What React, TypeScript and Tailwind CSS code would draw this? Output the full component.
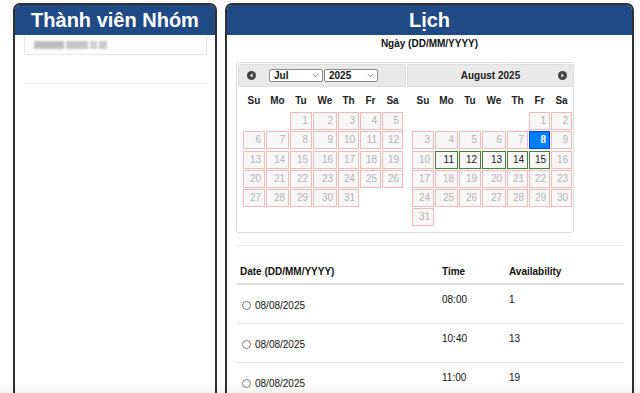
import React from "react";

const COLS = "grid grid-cols-[22px_23px_22px_24px_21px_21px_21px] gap-x-[1px]";
const DAY_NAMES = ["Su", "Mo", "Tu", "We", "Th", "Fr", "Sa"];

type Cell = { day: number; state?: "open" | "selected" } | null;

function buildMonth(startDow: number, days: number, open: number[], selected?: number): Cell[] {
  const cells: Cell[] = [];
  for (let i = 0; i < startDow; i++) cells.push(null);
  for (let d = 1; d <= days; d++) {
    cells.push({
      day: d,
      state: d === selected ? "selected" : open.includes(d) ? "open" : undefined,
    });
  }
  return cells;
}

const JULY = buildMonth(2, 31, []);
const AUGUST = buildMonth(5, 31, [11, 12, 13, 14, 15], 8);

const SLOTS = [
  { date: "08/08/2025", time: "08:00", avail: "1" },
  { date: "08/08/2025", time: "10:40", avail: "13" },
  { date: "08/08/2025", time: "11:00", avail: "19" },
];

function NavIcon({ dir }: { dir: "prev" | "next" }) {
  return (
    <svg width="9" height="9" viewBox="0 0 10 10" aria-hidden>
      <circle cx="5" cy="5" r="5" fill="#444" />
      {dir === "prev" ? (
        <path d="M6.2 2.8 L3.4 5 L6.2 7.2 Z" fill="#fff" />
      ) : (
        <path d="M3.8 2.8 L6.6 5 L3.8 7.2 Z" fill="#fff" />
      )}
    </svg>
  );
}

function FakeSelect({ value, width }: { value: string; width: string }) {
  return (
    <div
      className={`flex h-[13px] ${width} items-center justify-between rounded-[2px] border border-[#8a8a8a] bg-white pl-[4px] pr-[3px] text-[10px] font-bold leading-none text-[#111]`}
    >
      <span>{value}</span>
      <svg width="7" height="5" viewBox="0 0 7 5" aria-hidden>
        <path d="M0.8 1 L3.5 3.8 L6.2 1" fill="none" stroke="#666" strokeWidth="0.8" />
      </svg>
    </div>
  );
}

function MonthGrid({ cells }: { cells: Cell[] }) {
  return (
    <div className="px-[5px]">
      <div className={`${COLS} mt-[3px] h-[20px] items-center`}>
        {DAY_NAMES.map((d) => (
          <span key={d} className="text-center text-[10px] font-bold text-[#222]">
            {d}
          </span>
        ))}
      </div>
      <div className={`${COLS} mt-[2px] gap-y-[1.3px]`}>
        {cells.map((c, i) => {
          if (!c) return <div key={i} className="h-[18px]" />;
          const tone =
            c.state === "selected"
              ? "border-[#003eff] bg-[#007fff] font-bold text-white"
              : c.state === "open"
                ? "border-[#467f33] bg-[#f6f6f6] text-[#222]"
                : "border-[#f1b9b9] bg-[#f7f7f7] text-[#b4b4b4]";
          return (
            <div
              key={i}
              className={`h-[18px] border pr-[3px] text-right text-[10px] leading-[16px] ${tone}`}
            >
              {c.day}
            </div>
          );
        })}
      </div>
    </div>
  );
}

function Datepicker() {
  return (
    <div className="ml-[9px] mt-[12px] h-[171px] w-[338px] rounded-[3px] border border-[#dcdcdc] p-[1px]">
      <div className="flex">
        <div className="w-[168px]">
          <div className="flex h-[23px] items-center rounded-l-[3px] border border-[#dddddd] bg-[#e9e9e9] pl-[8px]">
            <NavIcon dir="prev" />
            <div className="ml-[13px] flex gap-[1px]">
              <FakeSelect value="Jul" width="w-[54px]" />
              <FakeSelect value="2025" width="w-[54px]" />
            </div>
          </div>
          <MonthGrid cells={JULY} />
        </div>
        <div className="ml-[1px] w-[167px]">
          <div className="relative flex h-[23px] items-center justify-center rounded-r-[3px] border border-[#dddddd] bg-[#e9e9e9]">
            <span className="text-[10px] font-bold text-[#222]">August 2025</span>
            <span className="absolute right-[6px] top-[6px]">
              <NavIcon dir="next" />
            </span>
          </div>
          <MonthGrid cells={AUGUST} />
        </div>
      </div>
    </div>
  );
}

function SlotTable() {
  return (
    <div className="ml-[9px] mr-[8px] mt-[12px] border-t border-[#eeeeee]">
      <div className="grid h-[39px] grid-cols-[206px_67px_1fr] items-end border-b-2 border-[#dddddd] pb-[4px] text-[10px] font-bold text-[#111]">
        <span className="pl-[4px]">Date (DD/MM/YYYY)</span>
        <span>Time</span>
        <span>Availability</span>
      </div>
      {SLOTS.map((s, i) => (
        <div
          key={i}
          className="grid h-[39px] grid-cols-[206px_67px_1fr] border-b border-[#e6e6e6] text-[10px] text-[#111]"
        >
          <div className="flex items-center gap-[4px] pl-[6px] pt-[2px]">
            <span className="h-[9px] w-[9px] rounded-full border border-[#777] bg-white" />
            <span>{s.date}</span>
          </div>
          <span className="pt-[7px]">{s.time}</span>
          <span className="pt-[7px]">{s.avail}</span>
        </div>
      ))}
    </div>
  );
}

function Panel({ title, width, children }: { title: string; width: string; children: React.ReactNode }) {
  return (
    <section
      className={`${width} h-[440px] shrink-0 overflow-hidden rounded-t-[7px] border-2 border-[#2f2f2f] bg-white`}
    >
      <header className="flex h-[30px] items-center justify-center bg-[#1f4a86] text-[20px] font-bold leading-none text-white">
        {title}
      </header>
      {children}
    </section>
  );
}

export default function App() {
  return (
    <div className="relative h-[393px] w-[640px] overflow-hidden bg-white font-['Liberation_Sans',Arial,sans-serif]">
      <div className="flex gap-2 pl-[13px] pt-[3px]">
        <Panel title="Thành viên Nhóm" width="w-[204px]">
          <div className="ml-[9px] mr-[8px] flex h-[20px] items-center gap-[2px] border border-t-0 border-[#e6e6e6] pl-[9px]">
            <span className="h-[8px] w-[30px] bg-[#bdbdbd] blur-[1px]" />
            <span className="h-[8px] w-[22px] bg-[#c6c6c6] blur-[1px]" />
            <span className="h-[8px] w-[7px] bg-[#cfcfcf] blur-[1px]" />
            <span className="h-[8px] w-[8px] bg-[#c9c9c9] blur-[1px]" />
          </div>
          <div className="ml-[9px] mr-[8px] mt-[28px] border-t border-[#eeeeee]" />
        </Panel>
        <Panel title="Lịch" width="w-[409px]">
          <div className="mt-[3px] text-center text-[10px] font-bold leading-[12px] text-[#111]">
            Ngày (DD/MM/YYYY)
          </div>
          <Datepicker />
          <SlotTable />
        </Panel>
      </div>
      <div className="pointer-events-none absolute inset-x-0 bottom-0 h-[10px] bg-gradient-to-t from-black/5 to-transparent" />
    </div>
  );
}
